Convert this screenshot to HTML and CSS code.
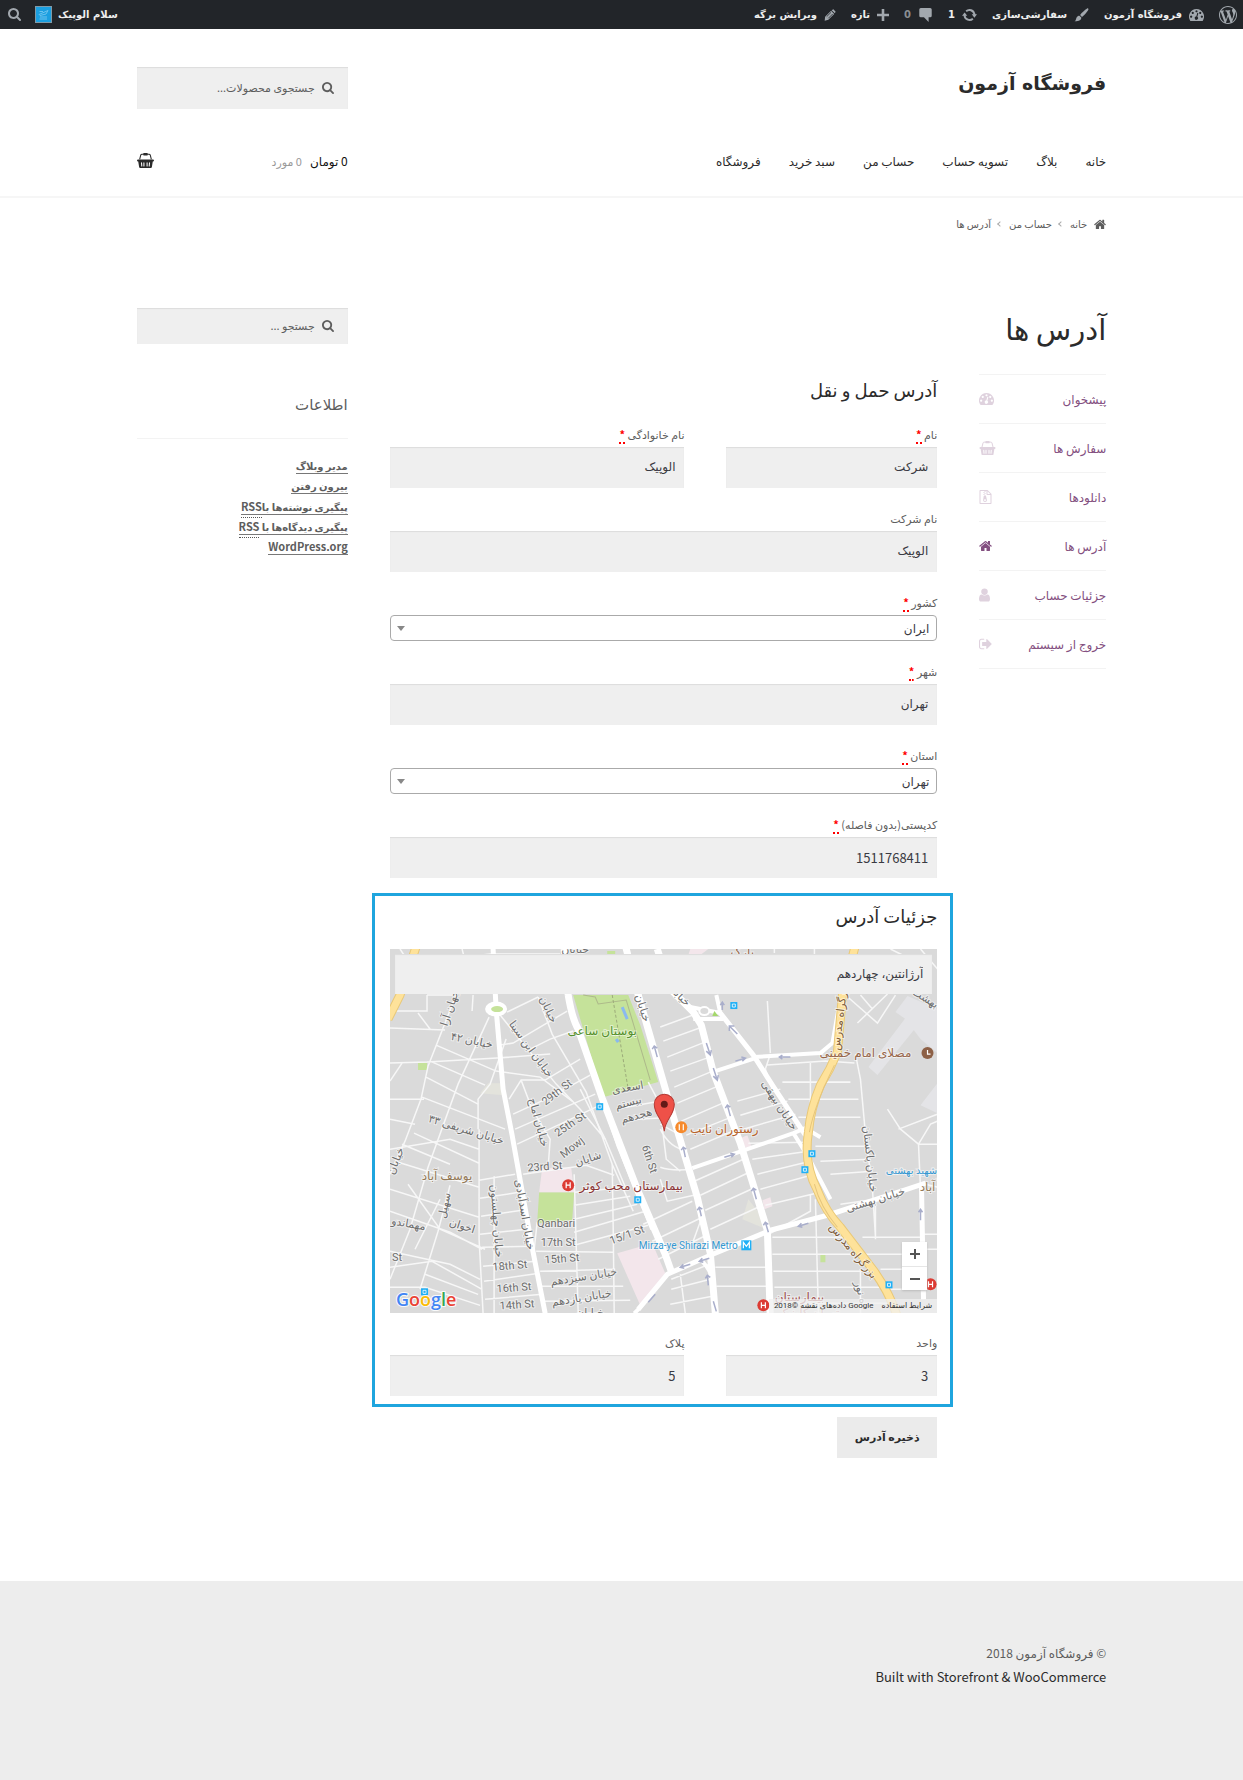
FILE: index.html
```html
<!DOCTYPE html>
<html lang="fa" dir="rtl">
<head>
<meta charset="utf-8">
<meta name="viewport" content="width=device-width, initial-scale=1">
<title>آدرس ها – فروشگاه آزمون</title>
<link rel="stylesheet" href="styles.css">
</head>
<body>
<svg class="sprite" aria-hidden="true">
  <symbol id="i-search" viewBox="64 128 1664 1664"><path d="M1216 832q0-185-131.500-316.500t-316.500-131.500-316.500 131.500-131.500 316.500 131.500 316.500 316.500 131.500 316.500-131.500 131.500-316.500zm512 832q0 52-38 90t-90 38q-54 0-90-38l-343-342q-179 124-399 124-143 0-273.500-55.500t-225-150-150-225-55.500-273.500 55.500-273.500 150-225 225-150 273.500-55.500 273.500 55.500 225 150 150 225 55.500 273.500q0 220-124 399l343 343q37 37 37 90z"/></symbol>
  <symbol id="i-home" viewBox="64 200 1664 1400"><path d="M1472 992v480q0 26-19 45t-45 19h-384v-384h-256v384h-384q-26 0-45-19t-19-45v-480q0-1 .5-3t.5-3l575-474 575 474q1 2 1 6zm223-69l-62 74q-8 9-21 11h-3q-13 0-21-7l-692-577-692 577q-12 8-24 7-13-2-21-11l-62-74q-8-10-7-23.500t11-21.500l719-599q32-26 76-26t76 26l244 204v-195q0-14 9-23t23-9h192q14 0 23 9t9 23v408l219 182q10 8 11 21.500t-7 23.500z"/></symbol>
  <symbol id="i-user" viewBox="256 128 1280 1536"><path d="M1536 1399q0 109-62.500 187t-150.500 78h-854q-88 0-150.500-78t-62.500-187q0-85 8.500-160.500t31.500-152 58.500-131 94-89 134.500-34.500q131 128 313 128t313-128q76 0 134.500 34.500t94 89 58.500 131 31.500 152 8.500 160.500zm-256-887q0 159-112.500 271.500t-271.500 112.500-271.500-112.500-112.500-271.500 112.500-271.500 271.500-112.500 271.500 112.500 112.500 271.500z"/></symbol>
  <symbol id="i-out" viewBox="64 256 1600 1280"><path d="M704 1440q0 4 1 20t.5 26.500-3 23.500-10 19.500-20.500 6.500h-320q-119 0-203.500-84.500t-84.500-203.500v-704q0-119 84.500-203.500t203.500-84.500h320q13 0 22.500 9.500t9.500 22.500q0 4 1 20t.5 26.500-3 23.500-10 19.500-20.500 6.500h-320q-66 0-113 47t-47 113v704q0 66 47 113t113 47h312l11.500 1 11.500 3 8 5.500 7 9 2 13.500zm928-544q0 26-19 45l-544 544q-19 19-45 19t-45-19-19-45v-288h-448q-26 0-45-19t-19-45v-384q0-26 19-45t45-19h448v-288q0-26 19-45t45-19 45 19l544 544q19 19 19 45z"/></symbol>
  <symbol id="i-gauge" viewBox="0 0 28 24"><path fill-rule="evenodd" d="M14 1A14 14 0 0 0 2.200 22.500Q2.600 23 3.500 23H24.500Q25.400 23 25.800 22.500A14 14 0 0 0 14 1ZM4 13a2 2 0 1 0 .01 0ZM7 6a2 2 0 1 0 .01 0ZM14 3a2 2 0 1 0 .01 0ZM21 6a2 2 0 1 0 .01 0ZM24 13a2 2 0 1 0 .01 0ZM17.500 8.500 15.600 15.400A3 3 0 1 1 13.600 14.800L15.600 8Z"/></symbol>
  <symbol id="i-basket" viewBox="0 0 32 28"><path fill-rule="evenodd" d="M30 12a2 2 0 0 1 0 4h-.3L28 26.300A2 2 0 0 1 26 28H6a2 2 0 0 1-2-1.700L2.300 16H2a2 2 0 0 1 0-4ZM8.500 17.500a1 1 0 0 0-1 1l.5 6a1 1 0 0 0 2 0l-.5-6a1 1 0 0 0-1-1ZM13 17.500a1 1 0 0 0-1 1v6a1 1 0 0 0 2 0v-6a1 1 0 0 0-1-1ZM19 17.500a1 1 0 0 0-1 1v6a1 1 0 0 0 2 0v-6a1 1 0 0 0-1-1ZM23.500 17.500a1 1 0 0 0-1 1l-.5 6a1 1 0 0 0 2 0l.5-6a1 1 0 0 0-1-1Z"/><path d="M5 12 7 4Q7.500 2.300 9.400 2.300H22.600Q24.500 2.300 25 4L27 12" fill="none" stroke="currentColor" stroke-width="2"/><rect x="12" y="0" width="8" height="4.500" rx="1"/></symbol>
  <symbol id="i-zip" viewBox="0 0 24 28"><path fill-rule="evenodd" d="M1.500 0H16l8 8v18.500a1.500 1.500 0 0 1-1.500 1.500h-21A1.500 1.500 0 0 1 0 26.500v-25A1.500 1.500 0 0 1 1.500 0ZM2 2v24h20V10h-6.500A1.500 1.500 0 0 1 14 8.500V2h-2v2h-2V2ZM16 2.500V8h5.500ZM8 4h2v2H8ZM10 6h2v2h-2ZM8 8h2v2H8ZM10 10h2v2h1l1.800 7.500a3.800 3.800 0 1 1-7.500 0L8.500 12H10ZM11 18.500a2 1.500 0 1 0 .01 0Z"/></symbol>
  <symbol id="i-wp" viewBox="0 0 20 20"><path d="M20 10c0-5.510-4.490-10-10-10C4.480 0 0 4.490 0 10c0 5.520 4.480 10 10 10 5.510 0 10-4.480 10-10zM7.780 15.370L4.370 6.220c.55-.02 1.170-.08 1.170-.08.5-.06.44-1.130-.06-1.110 0 0-1.450.11-2.370.11-.18 0-.37 0-.58-.01C4.120 2.690 6.870 1.110 10 1.110c2.330 0 4.450.87 6.050 2.340-.68-.11-1.650.39-1.650 1.580 0 .74.45 1.360.9 2.100.35.61.55 1.360.55 2.460 0 1.490-1.400 5-1.400 5l-3.030-8.370c.54-.02.82-.17.82-.17.5-.05.44-1.250-.06-1.220 0 0-1.440.12-2.380.12-.87 0-2.330-.12-2.330-.12-.5-.03-.56 1.200-.06 1.220l.92.08 1.260 3.410zM17.410 10c.24-.64.74-1.870.43-4.250.7 1.290 1.050 2.710 1.050 4.250 0 3.290-1.730 6.240-4.400 7.780.97-2.590 1.940-5.200 2.920-7.780zM6.100 18.090C3.120 16.650 1.110 13.530 1.110 10c0-1.300.23-2.480.72-3.590C3.250 10.300 4.670 14.200 6.100 18.090zm4.030-6.630l2.580 6.980c-.86.29-1.760.45-2.710.45-.79 0-1.570-.11-2.290-.33.81-2.380 1.620-4.740 2.420-7.100z"/></symbol>
  <symbol id="i-brush" viewBox="0 0 20 20"><path d="M19.500.6c.7.6.4 1.900-.3 2.800-2.500 3.500-5 6.800-8.500 9.300L8 10C10.800 6.400 14.500 3.200 18 .8c.5-.4 1.100-.5 1.500-.2ZM7 11l2.700 2.700c.3 3.300-2.700 5.300-9.700 5.300 2.400-1 1.700-3 3-5.500C3.900 11.800 5.300 11 7 11Z"/></symbol>
  <symbol id="i-update" viewBox="0 0 20 16"><path d="M10 0a8 8 0 0 1 7.500 5.500L18 7h2l-3.500 4.500L13 7h2.300A5.500 5.500 0 0 0 6.300 4L4.700 2A8 8 0 0 1 10 0ZM3.500 4.500 7 9H4.700a5.500 5.500 0 0 0 9 3l1.600 2A8 8 0 0 1 2.100 9H0Z"/></symbol>
  <symbol id="i-comment" viewBox="0 0 16 18"><path d="M2 0h12a2 2 0 0 1 2 2v8a2 2 0 0 1-2 2H12v6l-6-6H2a2 2 0 0 1-2-2V2a2 2 0 0 1 2-2Z"/></symbol>
  <symbol id="i-plus" viewBox="0 0 14 14"><path d="M5.500 0h3v5.500H14v3H8.500V14h-3V8.500H0v-3h5.500Z"/></symbol>
  <symbol id="i-pencil" viewBox="0 0 18 18"><path d="M11.500 1.800 14 .5 17.500 4 16.200 6.500ZM1.700 11.500 10.600 2.700 15.300 7.400 6.500 16.300 1 17.500Z"/><path d="M4 11.500 10.500 5M6.500 14 13 7.500" fill="none" stroke="#222529" stroke-width="1.200"/></symbol>
</svg>

<nav class="adminbar" aria-label="نوار ابزار">
  <ul class="adminbar-group">
    <li><a href="#" aria-label="وردپرس"><svg class="ic ic-18"><use href="#i-wp"/></svg></a></li>
    <li><a href="#"><svg class="ic"><use href="#i-gauge"/></svg>فروشگاه آزمون</a></li>
    <li><a href="#"><svg class="ic"><use href="#i-brush"/></svg>سفارشی‌سازی</a></li>
    <li><a href="#"><svg class="ic"><use href="#i-update"/></svg>1</a></li>
    <li><a href="#" class="dim"><svg class="ic"><use href="#i-comment"/></svg>0</a></li>
    <li><a href="#"><svg class="ic ic-12"><use href="#i-plus"/></svg>تازه</a></li>
    <li><a href="#"><svg class="ic ic-12"><use href="#i-pencil"/></svg>ویرایش برگه</a></li>
  </ul>
  <ul class="adminbar-group adminbar-user">
    <li><a href="#">سلام الوپیک
      <svg class="avatar" viewBox="0 0 17 17"><rect x=".5" y=".5" width="16" height="16" fill="#1b9fe0" stroke="#7f9aa8"/><path d="M4 8.500 13 4.500 11 8 5 9.500ZM4.500 5.500H8M5 11h7M4.500 13H12" fill="none" stroke="#6cc3ee"/></svg></a></li>
    <li><a href="#" aria-label="جستجو"><svg class="ic ic-13"><use href="#i-search"/></svg></a></li>
  </ul>
</nav>

<header class="site-header">
  <div class="wrap header-top">
    <a class="site-title" href="#">فروشگاه آزمون</a>
    <form class="search search-tall" role="search">
      <svg class="ic-12"><use href="#i-search"/></svg>
      <input type="search" aria-label="جستجوی محصولات" placeholder="جستجوی محصولات...">
    </form>
  </div>
  <div class="wrap header-bottom">
    <nav class="main-nav" aria-label="فهرست اصلی">
      <a href="#">خانه</a><a href="#">بلاگ</a><a href="#">تسویه حساب</a><a href="#">حساب من</a><a href="#">سبد خرید</a><a href="#">فروشگاه</a>
    </nav>
    <a class="cart" href="#"><span>0 تومان</span><small>0 مورد</small><svg><use href="#i-basket"/></svg></a>
  </div>
</header>

<nav class="wrap breadcrumb" aria-label="مسیر">
  <svg><use href="#i-home"/></svg><a href="#">خانه</a><i></i><a href="#">حساب من</a><i></i><span>آدرس ها</span>
</nav>

<div class="wrap page">
  <main class="content">
    <h1>آدرس ها</h1>
    <div class="account">
      <nav class="account-nav" aria-label="حساب کاربری">
        <a href="#">پیشخوان<svg class="w15"><use href="#i-gauge"/></svg></a>
        <a href="#">سفارش ها<svg class="w17"><use href="#i-basket"/></svg></a>
        <a href="#">دانلودها<svg class="w13"><use href="#i-zip"/></svg></a>
        <a href="#" class="active" aria-current="page">آدرس ها<svg class="w13"><use href="#i-home"/></svg></a>
        <a href="#">جزئیات حساب<svg class="w11"><use href="#i-user"/></svg></a>
        <a href="#">خروج از سیستم<svg class="w13"><use href="#i-out"/></svg></a>
      </nav>
      <form class="address">
        <h2>آدرس حمل و نقل</h2>
        <div class="pair">
          <div class="field"><label for="fname">نام <abbr title="ضروری">*</abbr></label><input id="fname" type="text" value="شرکت"></div>
          <div class="field"><label for="lname">نام خانوادگی <abbr title="ضروری">*</abbr></label><input id="lname" type="text" value="الوپیک"></div>
        </div>
        <div class="field"><label for="company">نام شرکت</label><input id="company" type="text" value="الوپیک"></div>
        <div class="field"><label for="country">کشور <abbr title="ضروری">*</abbr></label><select id="country"><option>ایران</option></select></div>
        <div class="field"><label for="city">شهر <abbr title="ضروری">*</abbr></label><input id="city" type="text" value="تهران"></div>
        <div class="field"><label for="state">استان <abbr title="ضروری">*</abbr></label><select id="state"><option>تهران</option></select></div>
        <div class="field"><label for="zip">کدپستی(بدون فاصله) <abbr title="ضروری">*</abbr></label><input id="zip" class="num" type="text" value="1511768411"></div>

        <section class="details">
          <h2>جزئیات آدرس</h2>
          <div class="map">
            <svg class="map-art" viewBox="0 0 547 364" preserveAspectRatio="xMidYMid slice" direction="ltr" aria-hidden="true">
              <rect width="547" height="364" fill="#dadada"/>
              <g fill="#e4e4e7"><path d="M505 63 517 47 547 60V104L530 90 515 70ZM515 69 525 79 487 126 478 118ZM547 134V164L530 156Z"/></g>
              <path fill="#e3e3dc" d="M90 144 98 134H112L114 146ZM352 270 358 250 372 268 376 280Z"/>
              <path fill="#c5e29a" d="M183 46H238L250 76 268 133 213 148ZM149 243H184L182 271 147 274ZM28 114H37V121H28ZM430 305H435V313H430ZM217 2H225V6H217Z"/>
              <path fill="#f3e6eb" d="M152 219 181 218 184 243H149ZM227 304 262 294 275 324 250 356ZM350 189 357 186 361 197 353 199ZM372 251 380 248 382 257 374 260ZM300 0H318L310 6H298Z"/>
              <g fill="none" stroke="#f7f7f7" stroke-width="1.500">
                <path d="M10 0 14 6M72 0 74 8 100 5H170M37 46V62L3 62M0 79 55 81M28 64 40 80M0 114 37 113 107 109 160 105M37 46 70 46M99 68 68 135 38 218 20 280 0 330M66 46 38 117 31 150 15 192 0 225M46 96 106 122 150 128 182 152M40 112 95 136M36 128 88 155M32 148 115 180M0 150 34 150M0 170 25 175M12 114 0 132M83 46 82 62M110 96 123 94 177 62M117 63 148 48M140 100 160 90 183 82"/>
                <path d="M148 48 162 85 196 143 222 215 243 262M110 66 166 135 190 160 215 190M116 90 100 135 88 150V180M119 150 131 131 155 131 190 110M123 165 160 148 200 126M125 180 205 145M131 131 142 160 160 190 158 218M127 195 170 175 212 155M89 180V290L93 364M0 200 60 190 89 200M5 212 89 238M12 195 60 215M24 184 89 214M0 240 89 268M18 235 50 280 95 300M60 236 48 282 30 340M0 262 60 283 92 300M104 227V364M89 231 125 225M90 249 129 243M91 267 132 261M90 285 136 280M92 298 140 297M93 317 145 312M94 332 149 324M95 350 152 345M0 302 60 315 90 330M0 318 42 312 92 340M0 338H35L90 356M35 325 88 345M50 250 25 300"/>
                <path d="M133 225 196 216 224 226M185 243 235 238M184 256 240 247M184 270 247 255M184 283 255 262M184 296 258 276M146 302 223 303M150 322 225 320M151 337 233 337M153 352 240 351M184 225 188 364M222 215 223 280 224 364M147 273 143 310M270 175 290 186M236 158 280 150M246 170 284 168M258 133 266 148M190 140 215 190 236 240M272 178 276 210 290 222M270 180Q280 200 297 201M270 218Q282 222 300 220M253 275 302 252M270 230 277 252 308 245M262 292 312 268M268 310 316 286M281 330 319 315M281 340 320 330M280 355 322 347M290 325 295 364M313 264 300 300"/>
                <path d="M270 78 308 64M273 92 312 78M277 108 317 92M280 122 322 107M284 138 327 120M287 154 330 136M291 172 337 152M296 186 341 168M300 200 347 180M304 232 353 210M310 246 359 223M315 261 363 239M320 280 372 256M324 300 378 284M325 318 379 318M326 337 380 337M347 152 390 140M350 166 397 152M353 180 405 165M358 194 417 193M362 210 418 202M367 225 420 212M370 240 424 225M375 256 430 243M420 245V262L380 284M425 250 428 364M382 288H455M382 305H480M383 322H485M384 338H495M384 354H500M377 52 380 104M379 108 375 120 382 140M377 116 435 112 464 114M392 133 460 133M398 150 468 150M408 168 470 168M420 114V153M465 105 470 130 475 185 482 240 485 288M425 197 480 197M430 212 480 210M440 225 482 222M450 255 485 250M472 288H530M478 305H530M485 252V290M490 320H530M500 340H533M455 46 487 74 505 46M467 74 497 45M510 42 540 8M500 0 520 10M530 0 547 20M470 46 482 60M384 0V4M424 0V6M497 160 510 180 528 195H547M530 240 528 195 540 175 547 172M535 235 547 238M532 285H547M533 300H547M508 180 547 165M470 320V364"/>
              </g>
              <g fill="none" stroke="#fff" stroke-width="7" stroke-linejoin="round">
                <path d="M178 46Q182 70 188 80L212 149 247 240 275 305 281 322M174 0 178 46M235 -4 248 46 287 181 307 248 320 304 325 364M267 0 280 40 303 63 311 76 323 123 350 194 377 281 380 370"/>
                <path stroke-width="5" d="M103 0 106 60 113 140 122 186 142 298 155 364M330 64 363 106 382 136 415 186M248 360 277 325 320 306 380 281 437 266 517 240 535 234M531 238 533 350"/>
                <path stroke-width="4" d="M300 58 330 64 326 46M303 70 333 70M363 108 430 104 442 94 448 60 453 46M325 122 365 109M302 219 403 184 415 179 430 188M403 184 418 208 440 250M212 149 228 196 262 280M244 364 250 358M312 312Q320 320 322 330"/>
              </g>
              <ellipse cx="106" cy="60" rx="11" ry="7.500" fill="#fff"/><ellipse cx="107" cy="60" rx="6" ry="3" fill="#c5e29a"/>
              <ellipse cx="314" cy="62" rx="5" ry="4" fill="#dadada" stroke="#fff" stroke-width="2"/><path d="M324 62 328 67H322Z" fill="#a4d86b"/>
              <g fill="none"><path d="M465 -4 452 46 447 103Q440 120 430 136 420 160 418 183 413 215 427 241 435 262 450 278L483 321Q500 345 507 368M27 -5 10 46 -2 70" stroke="#e9c877" stroke-width="9"/><path d="M465 -4 452 46 447 103Q440 120 430 136 420 160 418 183 413 215 427 241 435 262 450 278L483 321Q500 345 507 368M27 -5 10 46 -2 70" stroke="#fee29a" stroke-width="7"/><path d="M444 116Q424 156 419 183M424 235Q430 258 447 278" stroke="#e5c57c"/>
              <path d="M193 46 205 48 208 55 236 51 260 131" stroke="#adb98a" stroke-width="1"/><path d="M222 46 238 140" stroke="#9cab7a" stroke-dasharray="3 2"/><path d="M232 58 237 70M226 90 228 93" stroke="#8ab9ef" stroke-width="3"/></g>
              <path fill="none" stroke="#a9aecb" stroke-width="1.500" d="M316 94 320 106M316 102 320 106 321 101M323 119 327 131M323 127 327 131 328 126M347 85 339 77M339 82V77H344M332 61V53M330 56 332 53 334 56M400 108H389M392 106 389 108 392 110M345 112 355 109M351 108 355 109 352 112M267 108 264 97M262 100 264 97 267 99M295 208 293 198M291 201 293 198 296 200M311 267 309 258M307 261 309 258 312 260M366 250 363 239M361 242 363 239 366 241M378 283 375 273M373 276 375 273 378 275M334 208 344 205M340 204 344 205 341 208M418 274 408 277M411 274 408 277 412 278M300 315 290 318M293 315 290 318 294 319M318 336 317 326M315 329 317 326 320 328M323 352 326 362M530 271V260M528 263 530 260 532 263M319 309 309 312M312 309 309 312 313 313M340 167 337 156M335 159 337 156 340 158M258 353 265 345"/>
              <g class="road">
                <text transform="translate(63 60) rotate(-72)">جهان آرا</text><text transform="translate(81 95) rotate(12)">خیابان ۴۲</text><text transform="translate(138 102) rotate(54)">خیابان ابن سینا</text><text transform="translate(155 62) rotate(65)">خیابان</text><text transform="translate(249 60) rotate(72)">خیابان</text><text transform="translate(286 48) rotate(45)">خیابان</text>
                <text transform="translate(169 146) rotate(-38)">29th St</text><text transform="translate(182 178) rotate(-34)">25th St</text><text transform="translate(184 201) rotate(-38)">Mowj</text><text transform="translate(155 221) rotate(-4)">23rd St</text><text transform="translate(199 213) rotate(-18)">شایان</text><text transform="translate(145 174) rotate(75)">خیابان اماج</text>
                <text transform="translate(238 142) rotate(-10)">اسعدی</text><text transform="translate(239 157) rotate(-15)">بیستم</text><text transform="translate(247 170) rotate(-15)">هجدهم</text><text transform="translate(256 211) rotate(72)">6th St</text>
                <text transform="translate(75 184) rotate(17)">خیابان شریفی ۳۳</text><text transform="translate(9 213) rotate(-68)">خیابان</text><text transform="translate(18 278) rotate(10)">مهماندو</text><text transform="translate(58 257) rotate(-78)">سهیل</text><text transform="translate(71 280) rotate(18)">اخوان</text><text transform="translate(103 272) rotate(86)">خیابان چهلستون</text><text transform="translate(131 266) rotate(80)">خیابان اسدآبادی</text>
                <text x="166" y="278">Qanbari</text><text x="168" y="297">17th St</text><text transform="translate(172 313) rotate(-4)">15th St</text><text transform="translate(120 320) rotate(-5)">18th St</text><text transform="translate(124 342) rotate(-4)">16th St</text><text transform="translate(127 359) rotate(-4)">14th St</text><text x="7" y="312">St</text><text transform="translate(238 289) rotate(-20)">15/1 St</text><text transform="translate(194 331) rotate(-9)">خیابان سیزدهم</text><text transform="translate(192 352) rotate(-9)">خیابان یازدهم</text><text x="200" y="367">خیابان</text>
                <text transform="translate(386 158) rotate(57)">خیابان بیهقی</text><text transform="translate(476 210) rotate(84)">خیابان پاکستان</text><text transform="translate(486 254) rotate(-17)">خیابان بهشتی</text><text transform="translate(533 52) rotate(32)">بهشت</text><text transform="translate(467 344) rotate(75)">ه نور</text>
                <text x="185" y="4">خیابان</text>
              </g>
              <g class="road brown"><text transform="translate(453 68) rotate(-83)">بزرگراه مدرس</text><text transform="translate(460 304) rotate(50)">بزرگراه مدرس</text></g>
              <g class="place"><text x="212" y="86" fill="#55902e">بوستان ساعی</text><text x="475" y="108" fill="#97664a">مصلای امام خمینی</text><text x="334" y="184" fill="#b8652d">رستوران نایب</text><text x="57" y="231" fill="#947a58">یوسف آباد</text><text x="241" y="241" fill="#8b3434">بیمارستان محب کوثر</text><text x="537" y="242" fill="#947a58">آباد</text><text class="metro" x="521" y="225">شهید بهشتی</text><text x="409" y="352" fill="#9b4a4a">بیمارستان</text><text x="418" y="368" fill="#b98080">تهران کلینیک</text><text class="metro" x="298" y="300">Mirza-ye Shirazi Metro</text><text x="352" y="7" fill="#97664a">پارک</text></g>
              <g id="bus"><rect x="206" y="154" width="7" height="7" fill="#1fb0f6"/><path d="M208 156h3v3h-3Z" fill="none" stroke="#fff" stroke-width=".8"/></g>
              <use href="#bus" x="134" y="-101"/><use href="#bus" x="38" y="93"/><use href="#bus" x="212" y="47"/><use href="#bus" x="205" y="63"/><use href="#bus" x="289" y="178"/><use href="#bus" x="-175" y="185"/>
              <rect x="351" y="291" width="10" height="10" fill="#1fb0f6"/>
              <circle cx="178" cy="236" r="6" fill="#dc3b33"/><circle cx="373" cy="356" r="6" fill="#dc3b33"/><circle cx="540" cy="335" r="6" fill="#dc3b33"/><circle cx="291" cy="178" r="6" fill="#f68a2c"/><circle cx="537" cy="104" r="6" fill="#8d6046"/>
              <path d="M176 233v6M180 233v6M176 236h4M371 353v6M375 353v6M371 356h4M538 332v6M542 332v6M538 335h4M289 175v6M293 175v6M353 299v-6l3 4 3-4v6M537 101v4h3" fill="none" stroke="#fff" stroke-width="1.200"/>
              <path d="M274 182C273 170 264 166 264 155A10 10 0 0 1 284 155C284 166 275 170 274 182Z" fill="#ee5148" stroke="#b53a34"/><circle cx="274" cy="155" r="3.500" fill="#621a17"/>
              <g class="google"><text x="6" y="357"><tspan fill="#4285f4">G</tspan><tspan fill="#ea4335">o</tspan><tspan fill="#fbbc05">o</tspan><tspan fill="#4285f4">g</tspan><tspan fill="#34a853">l</tspan><tspan fill="#ea4335">e</tspan></text></g>
            </svg>
            <input class="map-search" type="text" aria-label="جستجوی آدرس" value="آرژانتین، چهاردهم">
            <div class="map-zoom"><button type="button" aria-label="بزرگ‌نمایی"><svg viewBox="0 0 10 10"><path d="M5 0V10M0 5H10"/></svg></button><button type="button" aria-label="کوچک‌نمایی"><svg viewBox="0 0 10 10"><path d="M0 5H10"/></svg></button></div>
            <div class="map-credit"><a href="#">شرایط استفاده</a><span>Google داده‌های نقشه ©2018</span></div>
          </div>
          <div class="pair">
            <div class="field"><label for="unit">واحد</label><input id="unit" class="num" type="text" value="3"></div>
            <div class="field"><label for="plaque">پلاک</label><input id="plaque" class="num" type="text" value="5"></div>
          </div>
        </section>
        <button class="save" type="submit">ذخیره آدرس</button>
      </form>
    </div>
  </main>

  <aside class="sidebar">
    <form class="search" role="search">
      <svg class="ic-12"><use href="#i-search"/></svg>
      <input type="search" aria-label="جستجو" placeholder="جستجو ...">
    </form>
    <h3>اطلاعات</h3>
    <ul>
      <li><a href="#">مدیر وبلاگ</a></li>
      <li><a href="#">بیرون رفتن</a></li>
      <li><a href="#">پیگیری نوشته‌ها با<abbr title="Really Simple Syndication">RSS</abbr></a></li>
      <li><a href="#">پیگیری دیدگاه‌ها با <abbr title="Really Simple Syndication">RSS</abbr></a></li>
      <li><a class="latin" href="#">WordPress.org</a></li>
    </ul>
  </aside>
</div>

<footer class="site-footer">
  <div class="wrap">
    <p>© فروشگاه آزمون 2018</p>
    <a href="#" dir="ltr">Built with Storefront &amp; WooCommerce</a>
  </div>
</footer>
</body>
</html>
```

FILE: styles.css
```css
* { box-sizing: border-box; }

body {
  margin: 0;
  background: #fff;
  color: #5d5d5d;
  font: 12px/20px "Noto Sans CJK SC", "DejaVu Sans", sans-serif;
}

a { color: inherit; text-decoration: none; }
ul { list-style: none; margin: 0; padding: 0; }
h1, h2, h3, p { margin: 0; font-weight: 400; }
svg { fill: currentColor; flex: none; }
input, select, button { font: inherit; color: inherit; margin: 0; border-radius: 0; }
.sprite { position: absolute; width: 0; height: 0; }

.wrap { width: 78%; max-width: 970px; margin: 0 auto; }

/* Admin bar */
.adminbar {
  display: flex;
  justify-content: space-between;
  height: 29px;
  padding: 0 6px;
  background: #222529;
  color: #eee;
  font: bold 10px/29px "DejaVu Sans", sans-serif;
}
.adminbar-group { display: flex; gap: 15px; }
.adminbar-group a { display: flex; align-items: center; gap: 7px; height: 29px; }
.adminbar-user { gap: 14px; }
.adminbar-user a { gap: 6px; }
.adminbar-user li:last-child { padding-left: 2px; }
.ic { width: 15px; height: 14px; color: #a2a8ae; }
.ic-18 { width: 18px; height: 18px; }
.ic-13 { width: 13px; height: 13px; }
.ic-12 { width: 12px; height: 12px; }
.dim { color: #8a8e92; }
.avatar { width: 17px; height: 17px; }

/* Header */
.site-header { border-bottom: 2px solid #f6f6f6; color: #2b2b2b; }
.header-top { display: flex; justify-content: space-between; padding-top: 38px; height: 110px; }
.site-title { font: bold 19px/32px "DejaVu Sans", sans-serif; }
.header-bottom { display: flex; justify-content: space-between; align-items: center; height: 57px; padding-bottom: 14px; }
.main-nav { display: flex; gap: 28px; }
.cart { display: flex; align-items: center; width: 211px; gap: 8px; color: #111; }
.cart small { font-size: 11px; color: #999; }
.cart svg { width: 17px; height: 15px; margin-right: auto; color: #2b2b2b; }

.search {
  display: flex;
  align-items: center;
  gap: 7px;
  width: 211px;
  height: 36px;
  padding: 0 14px;
  background: #efefef;
  box-shadow: inset 0 1px 1px #dcdcdc;
  color: #5d5d5d;
}
.search-tall { height: 42px; }
.search input { flex: 1; min-width: 0; padding: 0 0 2px; border: 0; background: none; outline: 0; font-size: 11px; -webkit-appearance: none; appearance: none; }
.search input::placeholder { color: #5d5d5d; opacity: 1; }

.breadcrumb { display: flex; align-items: center; gap: 7px; height: 54px; padding-bottom: 2px; font-size: 10px; }
.breadcrumb svg { width: 12px; height: 11px; }
.breadcrumb i { width: 4px; height: 4px; border: solid #aaa; border-width: 0 0 1px 1px; transform: rotate(45deg); }

/* Page columns */
.page { display: flex; gap: 42px; padding-top: 56px; padding-bottom: 123px; align-items: flex-start; }
.content { flex: 1; min-width: 0; }
.sidebar { width: 211px; }
h1 { color: #2b2b2b; font-size: 29px; line-height: 38px; padding-bottom: 28px; }
.account { display: flex; gap: 42px; align-items: flex-start; }
.account-nav { width: 127px; border-top: 1px solid #f3f3f3; color: #834f80; }
.account-nav a { display: flex; align-items: center; justify-content: space-between; height: 49px; padding-bottom: 1px; border-bottom: 1px solid #f3f3f3; }
.account-nav svg { height: 14px; opacity: .25; }
.account-nav .active svg { opacity: 1; }
.w11 { width: 11px; }
.w13 { width: 13px; }
.w15 { width: 15px; }
.w17 { width: 17px; }

/* Address form */
.address { flex: 1; min-width: 0; }
h2 { color: #2b2b2b; font-size: 18px; line-height: 30px; }
.address > h2 { margin-bottom: 17px; }
.pair { display: grid; grid-template-columns: 211fr 295fr; gap: 42px; }
.field { margin-bottom: 17px; }
.field label { display: block; height: 26px; line-height: 26px; font-size: 11px; }
.field abbr { color: #f00; font-weight: bold; text-decoration: none; border-bottom: 2px dotted #f00; }
.field input, .map-search {
  display: block;
  width: 100%;
  height: 41px;
  padding: 0 9px 4px;
  border: 0;
  background: #efefef;
  box-shadow: inset 0 1px 1px #dcdcdc;
  color: #3a3a42;
}
.field .num { padding-bottom: 0; font-size: 13px; }
.field select {
  display: block;
  width: 100%;
  height: 26px;
  padding: 0 7px;
  border: 1px solid #aaa;
  border-radius: 4px;
  background: #fff;
  color: #3a3a42;
  -webkit-appearance: none;
  appearance: none;
}
.field:has(select) { position: relative; }
.field:has(select)::after {
  content: "";
  position: absolute;
  left: 7px;
  bottom: 10px;
  border: solid transparent;
  border-width: 5px 4px 0;
  border-top-color: #888;
}

.details { margin: -2px -16px 10px -18px; padding: 4px 13px 8px 15px; border: 3px solid #1fa5de; }
.details h2 { margin-bottom: 19px; }
.details .field { margin-bottom: 0; }
.map { position: relative; margin-bottom: 16px; overflow: hidden; }
.map-art { display: block; width: 100%; aspect-ratio: 547 / 364; }
.map-art text { text-anchor: middle; stroke: #fff; stroke-width: 2px; stroke-opacity: .5; paint-order: stroke; font-family: Roboto, "DejaVu Sans", sans-serif; }
.road text { font-size: 11px; fill: #6d6d6d; }
.road.brown text { fill: #7d5a36; }
.place { font-size: 12px; }
.place .metro { font-size: 10px; fill: #3498d2; }
.map-art .google text { text-anchor: start; font: 600 18px "Open Sans", sans-serif; stroke-opacity: .9; }
.map-search { position: absolute; top: 5px; left: 5px; width: calc(100% - 10px); height: 40px; }
.map-zoom { position: absolute; right: 10px; bottom: 23px; width: 25px; background: #fff; box-shadow: 0 1px 2px #bbb; }
.map-zoom button { display: grid; place-items: center; width: 25px; height: 24px; padding: 0; border: 0; background: none; }
.map-zoom button + button { border-top: 1px solid #e6e6e6; }
.map-zoom svg { width: 10px; height: 10px; stroke: #555; stroke-width: 2; }
.map-credit { position: absolute; right: 0; bottom: 0; display: flex; gap: 8px; padding: 0 5px; background: #f0f0f0c0; color: #333; font: 8px/14px Roboto, "DejaVu Sans", sans-serif; }
.save { display: block; width: 100px; height: 41px; padding: 0 0 4px; border: 0; background: #ebebeb; color: #2b2b2b; font-weight: bold; font-size: 11px; }

/* Sidebar */
.sidebar h3 { margin-top: 45px; padding-bottom: 19px; border-bottom: 1px solid #f3f3f3; font-size: 15px; line-height: 30px; }
.sidebar ul { margin-top: 17px; font-weight: bold; font-size: 10px; }
.sidebar li { height: 20px; line-height: 20px; }
.sidebar li a { border-bottom: 1px solid #777; }
.sidebar abbr { padding-bottom: 3px; text-decoration: none; border-bottom: 1px dotted #555; font-size: 11px; }
.sidebar .latin { font-size: 11px; }

/* Footer */
.site-footer { min-height: 199px; padding: 60px 0; background: #ededed; }
.site-footer p, .site-footer a { display: block; line-height: 24px; text-align: right; }
.site-footer a { color: #2b2b2b; font-size: 13px; }
```
